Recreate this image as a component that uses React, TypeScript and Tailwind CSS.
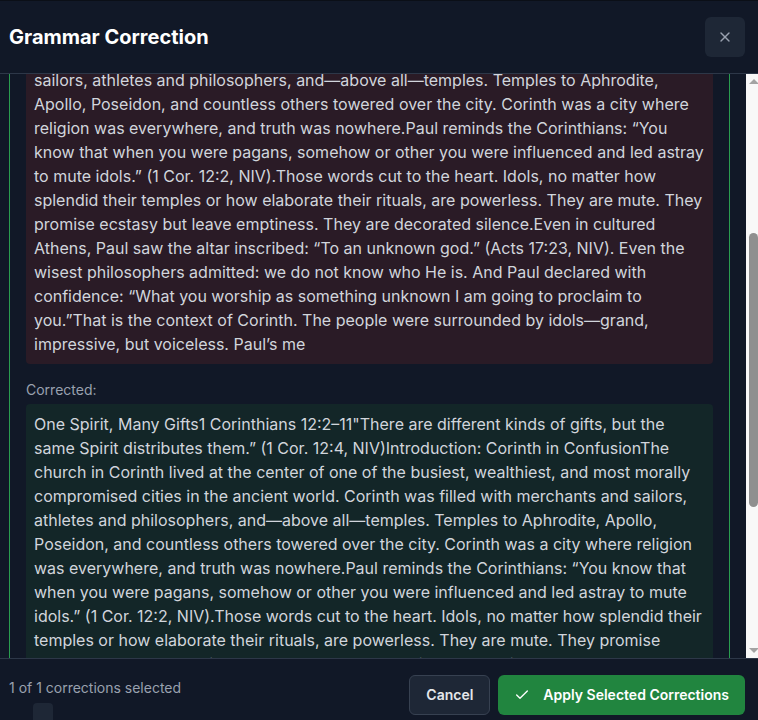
import { useEffect, useRef } from "react";
import { Check, X } from "lucide-react";

const original =
  "One Spirit, Many Gifts1 Corinthians 12:2–11\"There are different kinds of gifts, but the same Spirit distributes them.” (1 Cor. 12:4, NIV)Introduction: Corinth in ConfusionThe church in Corinth lived at the center of one of the busiest, wealthiest, and most morally compromised cities in the ancient world. Corinth was filled with with merchants and sailors, athletes and philosophers, and—above all—temples. Temples to Aphrodite, Apollo, Poseidon, and countless others towered over the city. Corinth was a city where religion was everywhere, and truth was nowhere.Paul reminds the Corinthians: “You know that when you were pagans, somehow or other you were influenced and led astray to mute idols.” (1 Cor. 12:2, NIV).Those words cut to the heart. Idols, no matter how splendid their temples or how elaborate their rituals, are powerless. They are mute. They promise ecstasy but leave emptiness. They are decorated silence.Even in cultured Athens, Paul saw the altar inscribed: “To an unknown god.” (Acts 17:23, NIV). Even the wisest philosophers admitted: we do not know who He is. And Paul declared with confidence: “What you worship as something unknown I am going to proclaim to you.”That is the context of Corinth. The people were surrounded by idols—grand, impressive, but voiceless. Paul’s me";

const corrected =
  "One Spirit, Many Gifts1 Corinthians 12:2–11\"There are different kinds of gifts, but the same Spirit distributes them.” (1 Cor. 12:4, NIV)Introduction: Corinth in ConfusionThe church in Corinth lived at the center of one of the busiest, wealthiest, and most morally compromised cities in the ancient world. Corinth was filled with merchants and sailors, athletes and philosophers, and—above all—temples. Temples to Aphrodite, Apollo, Poseidon, and countless others towered over the city. Corinth was a city where religion was everywhere, and truth was nowhere.Paul reminds the Corinthians: “You know that when you were pagans, somehow or other you were influenced and led astray to mute idols.” (1 Cor. 12:2, NIV).Those words cut to the heart. Idols, no matter how splendid their temples or how elaborate their rituals, are powerless. They are mute. They promise ecstasy but leave emptiness. They are decorated silence.Even in cultured Athens, Paul saw the altar inscribed: “To an unknown god.” (Acts 17:23, NIV). Even the wisest philosophers admitted: we do not know who He is. And Paul declared with confidence: “What you worship as something unknown I am going to proclaim to you.”That is the context of Corinth. The people were surrounded by idols—grand, impressive, but voiceless. Paul’s message";

function Scrollbar() {
  return (
    <div className="flex w-[15px] shrink-0 flex-col bg-[#f8f8f8]">
      <div className="flex h-[15px] items-center justify-center">
        <div className="h-0 w-0 border-x-[5px] border-b-[5px] border-x-transparent border-b-[#a3a3a3]" />
      </div>
      <div className="flex-1">
        <div className="mx-auto mt-[144px] h-[274px] w-[9px] rounded-full bg-[#8f8f8f]" />
      </div>
      <div className="flex h-[15px] items-center justify-center">
        <div className="h-0 w-0 border-x-[5px] border-t-[5px] border-x-transparent border-t-[#a3a3a3]" />
      </div>
    </div>
  );
}

export default function App() {
  const scrollRef = useRef<HTMLDivElement>(null);
  const labelRef = useRef<HTMLParagraphElement>(null);

  useEffect(() => {
    if (scrollRef.current && labelRef.current) {
      scrollRef.current.scrollTop = labelRef.current.offsetTop - 306;
    }
  }, []);

  return (
    <div className="h-screen overflow-hidden bg-[#0b0f17] font-[Inter,sans-serif]">
      <div className="mt-px -ml-[7px] w-[768px] bg-[#111827]">
        <div className="flex items-center justify-between border-b border-[#2d3748] px-4 py-4">
          <h2 className="text-xl font-bold text-white">Grammar Correction</h2>
          <button className="flex h-10 w-10 items-center justify-center rounded-md bg-[#1e2736] text-gray-400">
            <X className="h-4 w-4" strokeWidth={2} />
          </button>
        </div>

        <div className="flex h-[584px]">
          <div
            ref={scrollRef}
            className="relative flex-1 overflow-y-scroll p-4 [scrollbar-width:none] [&::-webkit-scrollbar]:hidden"
          >
            <div className="rounded-lg border border-[#2a9d4f] p-4">
              <div className="mb-3 flex items-center gap-3">
                <span className="flex h-5 w-5 items-center justify-center rounded bg-[#21853f] text-white">
                  <Check className="h-3.5 w-3.5" strokeWidth={3} />
                </span>
                <span className="font-medium text-white">Correction 1</span>
                <span className="rounded-full bg-gray-800 px-2 py-0.5 text-xs text-gray-300">Grammar</span>
              </div>
              <p className="mb-4 text-sm leading-5 text-gray-400">
                Removed a repeated word and completed the truncated word at the end of the passage.
              </p>
              <p className="mb-1 text-sm text-gray-400">Original:</p>
              <div className="rounded bg-[#2a1b26] p-2 text-base leading-6 text-gray-300">{original}</div>

              <p ref={labelRef} className="mt-4 mb-1 text-sm text-gray-400">
                Corrected:
              </p>
              <div className="rounded bg-[#132628] p-2 text-base leading-6 text-gray-300">{corrected}</div>

              <p className="mt-4 mb-1 text-sm text-gray-400">Explanation:</p>
              <p className="text-sm leading-5 text-gray-300">
                “filled with with merchants” → “filled with merchants”; the truncated “Paul’s me” was completed.
              </p>
            </div>
          </div>
          <Scrollbar />
        </div>

        <div className="flex items-start justify-between border-t border-[#2d3748] px-4 py-4">
          <div className="flex flex-col pt-[3px]">
            <span className="text-sm leading-5 text-gray-400">1 of 1 corrections selected</span>
            <div className="mt-[5px] ml-6 h-5 w-5 rounded-t bg-[#1e2736]" />
          </div>
          <div className="flex gap-2">
            <button className="h-10 rounded-md border border-[#374151] bg-[#1e2736] px-4 text-sm font-semibold text-gray-200">
              Cancel
            </button>
            <button className="flex h-10 items-center gap-[13px] rounded-md bg-[#21853f] px-4 text-sm font-semibold text-white">
              <Check className="h-4 w-4" strokeWidth={2} />
              Apply Selected Corrections
            </button>
          </div>
        </div>
      </div>
    </div>
  );
}
